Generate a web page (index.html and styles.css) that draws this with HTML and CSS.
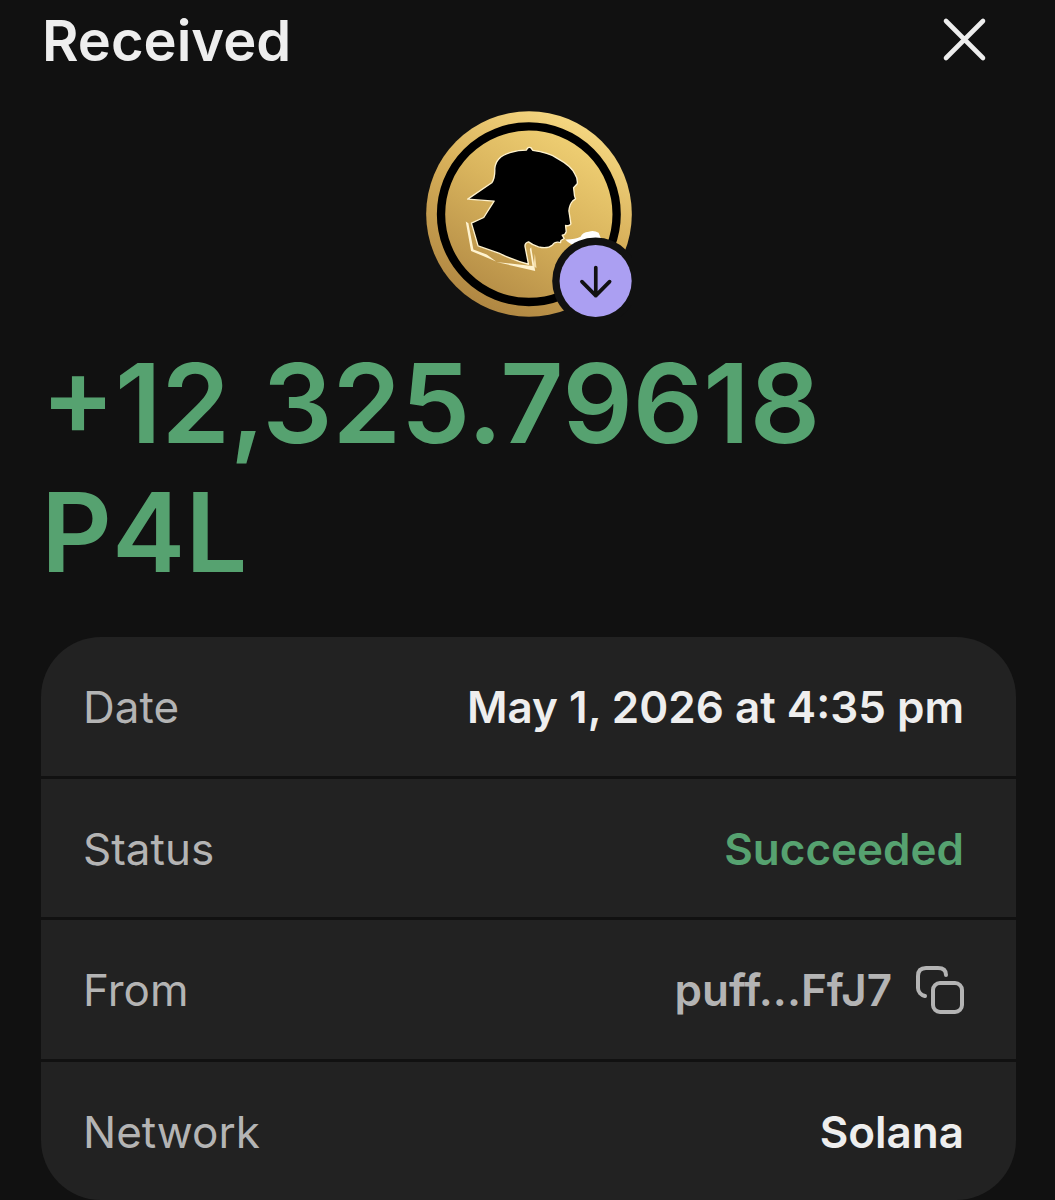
FILE: index.html
```
<!DOCTYPE html>
<html lang="en">
<head>
<meta charset="utf-8">
<meta name="viewport" content="width=device-width, initial-scale=1">
<title>Received</title>
<link rel="stylesheet" href="styles.css">
</head>
<body>
<header class="header">
  <h1 class="title">Received</h1>
  <button class="close" type="button" aria-label="Close">
    <svg width="46" height="46" viewBox="0 0 46 46" fill="none" stroke="currentColor" stroke-width="4.6" stroke-linecap="round"><path d="M4 4 41 41M41 4 4 41"/></svg>
  </button>
</header>
<main class="main">
  <svg class="coin" viewBox="18 34 617 617" role="img" aria-label="P4L token received">
    <defs>
      <linearGradient id="rim" x1="0.75" y1="0.05" x2="0.3" y2="1">
        <stop offset="0" stop-color="#f5d781"/><stop offset="0.45" stop-color="#d6ae58"/><stop offset="1" stop-color="#ae8541"/>
      </linearGradient>
      <linearGradient id="face" x1="0.85" y1="0.1" x2="0.3" y2="1">
        <stop offset="0" stop-color="#f0d074"/><stop offset="0.45" stop-color="#d9b45d"/><stop offset="1" stop-color="#b58d46"/>
      </linearGradient>
    </defs>
    <circle cx="326.500" cy="342.500" r="308" fill="url(#rim)"/>
    <circle cx="326" cy="343" r="263" fill="url(#face)" stroke="#000" stroke-width="25"/>
    <path d="M143 298 215 249Q225 235 224 207C226 181 246 165 272 158Q294 151 319 151Q323 140 332 144L338 152Q385 158 410 175Q454 199 464 223Q473 236 471 252L460 264 463 289 466 297 457 304Q448 314 446 333L452 372Q447 380 436 377L438 395Q436 404 426 406L432 416 422 422 421 428Q404 424 397 435Q382 448 355 441Q338 436 325 426Q312 430 315 442L325 493Q286 483 236 460L174 438 154 370 191 353 222 304Z" fill="#000" stroke="#fff3cf" stroke-width="4" stroke-linejoin="round"/>
    <path d="M137 365 153 453 228 485 200 464 160 449 145 370ZM228 486 345 513 333 442 329 447 337 498Z" fill="#fff3cf"/>
    <path d="M344 461 349 504 340 499Z" fill="#f5dfab"/>
    <path d="M435 419Q462 420 481 411Q487 397 505 396Q520 390 535 399L544 420 480 440Q453 439 435 419Z" fill="#fff"/>
    <circle cx="526" cy="543" r="130" fill="#111"/>
    <circle cx="526" cy="543" r="108" fill="#ab9ff2"/>
    <path d="M526.500 503V587M485 545 526.500 587 568 545" fill="none" stroke="#111" stroke-width="11" stroke-linecap="round" stroke-linejoin="round"/>
  </svg>
  <p class="amount">+12,325.79618 P4L</p>
  <dl class="details">
    <div class="row"><dt>Date</dt><dd>May 1, 2026 at 4:35 pm</dd></div>
    <div class="row"><dt>Status</dt><dd class="success">Succeeded</dd></div>
    <div class="row"><dt>From</dt><dd class="address">puff...FfJ7
      <button class="copy" type="button" aria-label="Copy address">
        <svg width="48" height="48" viewBox="0 0 48 48" fill="none" stroke="currentColor" stroke-width="4" stroke-linecap="round"><rect x="17" y="17" width="29" height="29" rx="7"/><path d="M9 30C5 29 2 26 2 22V10Q2 2 10 2H22Q30 2 30 9"/></svg>
      </button></dd></div>
    <div class="row"><dt>Network</dt><dd>Solana</dd></div>
  </dl>
</main>
</body>
</html>
```
FILE: styles.css
```
* {
  box-sizing: border-box;
}

body {
  margin: 0;
  min-height: 100vh;
  display: flex;
  flex-direction: column;
  background: #111;
  color: #eee;
  font-family: Inter, "Liberation Sans", sans-serif;
}

.header {
  display: flex;
  align-items: center;
  justify-content: space-between;
  padding: 0 50px 0 42px;
}

.title {
  margin: 0;
  padding-top: 2px;
  font-size: 56px;
  line-height: 78px;
  font-weight: 600;
}

button {
  display: flex;
  align-items: center;
  justify-content: center;
  padding: 0;
  border: 0;
  background: none;
  color: inherit;
  cursor: pointer;
}

.close {
  width: 80px;
  height: 80px;
}

.main {
  flex: 1;
  display: flex;
  flex-direction: column;
  padding: 31px 39px 0 41px;
}

.coin {
  width: 206px;
  height: 206px;
  align-self: center;
}

.amount {
  margin: 22px 0 40px;
  color: #56a270;
  font-size: 110px;
  line-height: 129px;
  font-weight: 600;
}

.details {
  flex: 1;
  display: grid;
  grid-auto-rows: 1fr;
  gap: 3px;
  margin: 0;
  overflow: hidden;
  border-radius: 60px;
  font-size: 44px;
  line-height: 56px;
}

.row {
  display: flex;
  align-items: center;
  justify-content: space-between;
  padding: 41px 52px 39px 42px;
  background: #222;
}

dt {
  color: #b4b4b4;
}

dd {
  margin: 0;
  font-weight: 600;
}

.success {
  color: #56a270;
}

.address {
  display: flex;
  align-items: center;
  gap: 24px;
  color: #b4b4b4;
}
```
